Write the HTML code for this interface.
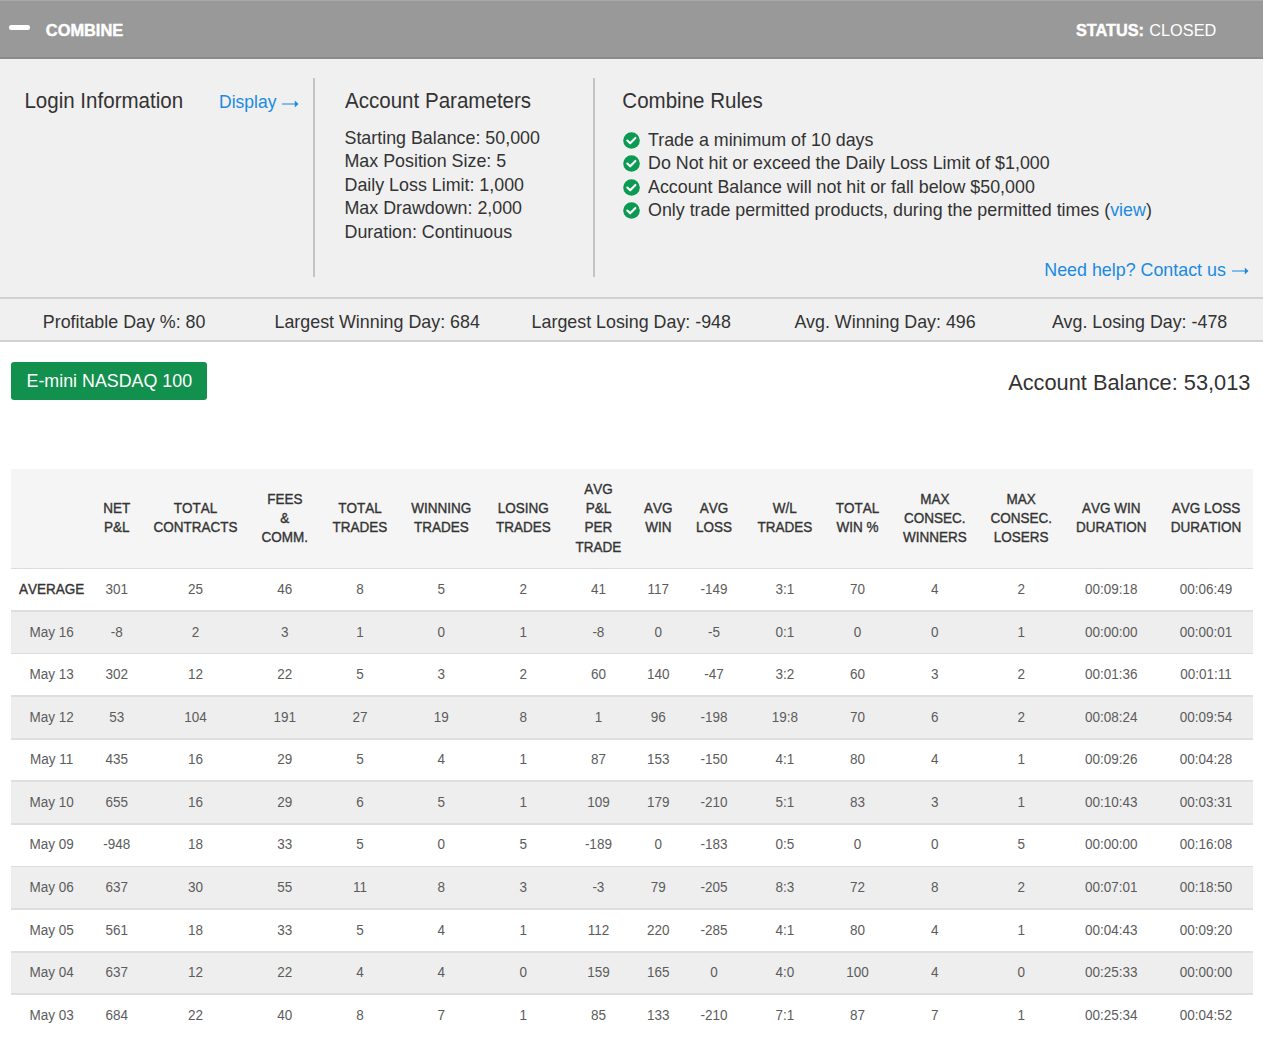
<!DOCTYPE html>
<html><head><meta charset="utf-8"><style>
html,body{margin:0;padding:0;}
body{width:1263px;height:1042px;position:relative;overflow:hidden;background:#fff;font-family:"Liberation Sans",sans-serif;}
.t{position:absolute;white-space:nowrap;line-height:1;}
.c{text-align:center;}
.r{text-align:right;}
.ck{position:absolute;}
</style></head><body>
<div style="position:absolute;left:0;top:0;width:1263px;height:58px;background:#999;"></div>
<div style="position:absolute;left:0;top:0;width:1263px;height:1px;background:#a8a8a8;"></div>
<div style="position:absolute;left:0;top:57px;width:1263px;height:1.5px;background:#8a8a8a;"></div>
<div style="position:absolute;left:8.6px;top:25.4px;width:21.4px;height:4.5px;background:#fff;border-radius:2.2px;"></div>
<div class="t" style="left:45.80px;top:22.42px;font-size:16.4px;color:#fff;font-weight:bold;-webkit-text-stroke:0.45px #fff;">COMBINE</div>
<div class="t" style="left:1075.90px;top:22.00px;font-size:16.3px;color:#fff;font-weight:bold;-webkit-text-stroke:0.45px #fff;">STATUS:</div>
<div class="t" style="left:1149.30px;top:22.00px;font-size:16.3px;color:#fff;">CLOSED</div>
<div style="position:absolute;left:0;top:58.5px;width:1263px;height:239px;background:#f0f0f0;"></div>
<div style="position:absolute;left:313px;top:78px;width:1.6px;height:199px;background:#c4c4c4;"></div>
<div style="position:absolute;left:593px;top:78px;width:1.6px;height:199px;background:#c4c4c4;"></div>
<div class="t" style="left:24.40px;top:91.10px;font-size:20.55px;color:#333;transform:scaleY(1.1);transform-origin:0 17.40px;">Login Information</div>
<div class="t" style="left:219.00px;top:94.19px;font-size:17.5px;color:#1a8be0;transform:scaleY(1.04);transform-origin:0 14.81px;">Display</div>
<svg class="ck" style="left:282.20px;top:99.50px" width="17" height="8" viewBox="0 0 17 8"><rect x="0" y="3.4" width="13.5" height="1.2" fill="#1a8be0" opacity="0.85"/><path d="M12.8 0.4 L16.5 4 L12.8 7.6 Z" fill="#1a8be0"/></svg>
<div class="t" style="left:345.00px;top:91.20px;font-size:20.55px;color:#333;transform:scaleY(1.1);transform-origin:0 17.40px;">Account Parameters</div>
<div class="t" style="left:344.50px;top:130.09px;font-size:17.85px;color:#333;transform:scaleY(1.04);transform-origin:0 15.11px;">Starting Balance: 50,000</div>
<div class="t" style="left:344.50px;top:153.49px;font-size:17.85px;color:#333;transform:scaleY(1.04);transform-origin:0 15.11px;">Max Position Size: 5</div>
<div class="t" style="left:344.50px;top:176.89px;font-size:17.85px;color:#333;transform:scaleY(1.04);transform-origin:0 15.11px;">Daily Loss Limit: 1,000</div>
<div class="t" style="left:344.50px;top:200.29px;font-size:17.85px;color:#333;transform:scaleY(1.04);transform-origin:0 15.11px;">Max Drawdown: 2,000</div>
<div class="t" style="left:344.50px;top:223.69px;font-size:17.85px;color:#333;transform:scaleY(1.04);transform-origin:0 15.11px;">Duration: Continuous</div>
<div class="t" style="left:622.30px;top:91.20px;font-size:20.55px;color:#333;transform:scaleY(1.1);transform-origin:0 17.40px;">Combine Rules</div>
<svg class="ck" style="left:623.3px;top:131.7px" width="17" height="17" viewBox="0 0 17 17"><circle cx="8.5" cy="8.5" r="8.3" fill="#0a9a52"/><path d="M4.3 8.5 L7.2 11.3 L12.4 5.9" stroke="#fff" stroke-width="2.1" fill="none" stroke-linecap="round" stroke-linejoin="round"/></svg>
<div class="t" style="left:648.00px;top:131.89px;font-size:17.85px;color:#333;transform:scaleY(1.04);transform-origin:0 15.11px;">Trade a minimum of 10 days</div>
<svg class="ck" style="left:623.3px;top:155.2px" width="17" height="17" viewBox="0 0 17 17"><circle cx="8.5" cy="8.5" r="8.3" fill="#0a9a52"/><path d="M4.3 8.5 L7.2 11.3 L12.4 5.9" stroke="#fff" stroke-width="2.1" fill="none" stroke-linecap="round" stroke-linejoin="round"/></svg>
<div class="t" style="left:648.00px;top:155.39px;font-size:17.85px;color:#333;transform:scaleY(1.04);transform-origin:0 15.11px;">Do Not hit or exceed the Daily Loss Limit of $1,000</div>
<svg class="ck" style="left:623.3px;top:178.7px" width="17" height="17" viewBox="0 0 17 17"><circle cx="8.5" cy="8.5" r="8.3" fill="#0a9a52"/><path d="M4.3 8.5 L7.2 11.3 L12.4 5.9" stroke="#fff" stroke-width="2.1" fill="none" stroke-linecap="round" stroke-linejoin="round"/></svg>
<div class="t" style="left:648.00px;top:178.89px;font-size:17.85px;color:#333;transform:scaleY(1.04);transform-origin:0 15.11px;">Account Balance will not hit or fall below $50,000</div>
<svg class="ck" style="left:623.3px;top:202.2px" width="17" height="17" viewBox="0 0 17 17"><circle cx="8.5" cy="8.5" r="8.3" fill="#0a9a52"/><path d="M4.3 8.5 L7.2 11.3 L12.4 5.9" stroke="#fff" stroke-width="2.1" fill="none" stroke-linecap="round" stroke-linejoin="round"/></svg>
<div class="t" style="left:648.00px;top:202.39px;font-size:17.85px;color:#333;transform:scaleY(1.04);transform-origin:0 15.11px;">Only trade permitted products, during the permitted times (<span style="color:#1a8be0">view</span>)</div>
<div class="t" style="left:1044.30px;top:261.69px;font-size:17.85px;color:#1a8be0;transform:scaleY(1.04);transform-origin:0 15.11px;">Need help? Contact us</div>
<svg class="ck" style="left:1231.90px;top:266.80px" width="17" height="8" viewBox="0 0 17 8"><rect x="0" y="3.4" width="13.5" height="1.2" fill="#1a8be0" opacity="0.85"/><path d="M12.8 0.4 L16.5 4 L12.8 7.6 Z" fill="#1a8be0"/></svg>
<div style="position:absolute;left:0;top:297.3px;width:1263px;height:2px;background:#d2d2d2;"></div>
<div style="position:absolute;left:0;top:299.3px;width:1263px;height:41px;background:#f0f0f0;"></div>
<div style="position:absolute;left:0;top:340.2px;width:1263px;height:2px;background:#d2d2d2;"></div>
<div class="t" style="left:42.80px;top:313.99px;font-size:17.85px;color:#333;transform:scaleY(1.04);transform-origin:0 15.11px;">Profitable Day %: 80</div>
<div class="t" style="left:274.50px;top:313.99px;font-size:17.85px;color:#333;transform:scaleY(1.04);transform-origin:0 15.11px;">Largest Winning Day: 684</div>
<div class="t" style="left:531.60px;top:313.99px;font-size:17.85px;color:#333;transform:scaleY(1.04);transform-origin:0 15.11px;">Largest Losing Day: -948</div>
<div class="t" style="left:794.50px;top:313.99px;font-size:17.85px;color:#333;transform:scaleY(1.04);transform-origin:0 15.11px;">Avg. Winning Day: 496</div>
<div class="t" style="left:1052.00px;top:313.99px;font-size:17.85px;color:#333;transform:scaleY(1.04);transform-origin:0 15.11px;">Avg. Losing Day: -478</div>
<div style="position:absolute;left:11px;top:362.2px;width:196.3px;height:38.3px;background:#12904d;border-radius:3px;"></div>
<div class="t" style="left:26.50px;top:372.79px;font-size:17.85px;color:#fff;transform:scaleY(1.04);transform-origin:0 15.11px;">E-mini NASDAQ 100</div>
<div class="t r" style="left:650.50px;width:600px;top:371.95px;font-size:21.8px;color:#333;transform:scaleY(1.05);transform-origin:0 18.45px;">Account Balance: 53,013</div>
<div style="position:absolute;left:11px;top:469px;width:1242px;height:100px;background:#f5f5f5;"></div>
<div class="t c" style="left:-183.30px;width:600px;top:502.32px;font-size:13.5px;color:#333;-webkit-text-stroke:0.35px #383838;font-kerning:none;transform:scaleY(1.1);transform-origin:0 11.43px;">NET</div>
<div class="t c" style="left:-183.30px;width:600px;top:521.42px;font-size:13.5px;color:#333;-webkit-text-stroke:0.35px #383838;font-kerning:none;transform:scaleY(1.1);transform-origin:0 11.43px;">P&amp;L</div>
<div class="t c" style="left:-104.40px;width:600px;top:502.32px;font-size:13.5px;color:#333;-webkit-text-stroke:0.35px #383838;font-kerning:none;transform:scaleY(1.1);transform-origin:0 11.43px;">TOTAL</div>
<div class="t c" style="left:-104.40px;width:600px;top:521.42px;font-size:13.5px;color:#333;-webkit-text-stroke:0.35px #383838;font-kerning:none;transform:scaleY(1.1);transform-origin:0 11.43px;">CONTRACTS</div>
<div class="t c" style="left:-15.20px;width:600px;top:492.77px;font-size:13.5px;color:#333;-webkit-text-stroke:0.35px #383838;font-kerning:none;transform:scaleY(1.1);transform-origin:0 11.43px;">FEES</div>
<div class="t c" style="left:-15.20px;width:600px;top:511.87px;font-size:13.5px;color:#333;-webkit-text-stroke:0.35px #383838;font-kerning:none;transform:scaleY(1.1);transform-origin:0 11.43px;">&amp;</div>
<div class="t c" style="left:-15.20px;width:600px;top:530.97px;font-size:13.5px;color:#333;-webkit-text-stroke:0.35px #383838;font-kerning:none;transform:scaleY(1.1);transform-origin:0 11.43px;">COMM.</div>
<div class="t c" style="left:60.00px;width:600px;top:502.32px;font-size:13.5px;color:#333;-webkit-text-stroke:0.35px #383838;font-kerning:none;transform:scaleY(1.1);transform-origin:0 11.43px;">TOTAL</div>
<div class="t c" style="left:60.00px;width:600px;top:521.42px;font-size:13.5px;color:#333;-webkit-text-stroke:0.35px #383838;font-kerning:none;transform:scaleY(1.1);transform-origin:0 11.43px;">TRADES</div>
<div class="t c" style="left:141.30px;width:600px;top:502.32px;font-size:13.5px;color:#333;-webkit-text-stroke:0.35px #383838;font-kerning:none;transform:scaleY(1.1);transform-origin:0 11.43px;">WINNING</div>
<div class="t c" style="left:141.30px;width:600px;top:521.42px;font-size:13.5px;color:#333;-webkit-text-stroke:0.35px #383838;font-kerning:none;transform:scaleY(1.1);transform-origin:0 11.43px;">TRADES</div>
<div class="t c" style="left:223.30px;width:600px;top:502.32px;font-size:13.5px;color:#333;-webkit-text-stroke:0.35px #383838;font-kerning:none;transform:scaleY(1.1);transform-origin:0 11.43px;">LOSING</div>
<div class="t c" style="left:223.30px;width:600px;top:521.42px;font-size:13.5px;color:#333;-webkit-text-stroke:0.35px #383838;font-kerning:none;transform:scaleY(1.1);transform-origin:0 11.43px;">TRADES</div>
<div class="t c" style="left:298.40px;width:600px;top:483.22px;font-size:13.5px;color:#333;-webkit-text-stroke:0.35px #383838;font-kerning:none;transform:scaleY(1.1);transform-origin:0 11.43px;">AVG</div>
<div class="t c" style="left:298.40px;width:600px;top:502.32px;font-size:13.5px;color:#333;-webkit-text-stroke:0.35px #383838;font-kerning:none;transform:scaleY(1.1);transform-origin:0 11.43px;">P&amp;L</div>
<div class="t c" style="left:298.40px;width:600px;top:521.42px;font-size:13.5px;color:#333;-webkit-text-stroke:0.35px #383838;font-kerning:none;transform:scaleY(1.1);transform-origin:0 11.43px;">PER</div>
<div class="t c" style="left:298.40px;width:600px;top:540.52px;font-size:13.5px;color:#333;-webkit-text-stroke:0.35px #383838;font-kerning:none;transform:scaleY(1.1);transform-origin:0 11.43px;">TRADE</div>
<div class="t c" style="left:358.30px;width:600px;top:502.32px;font-size:13.5px;color:#333;-webkit-text-stroke:0.35px #383838;font-kerning:none;transform:scaleY(1.1);transform-origin:0 11.43px;">AVG</div>
<div class="t c" style="left:358.30px;width:600px;top:521.42px;font-size:13.5px;color:#333;-webkit-text-stroke:0.35px #383838;font-kerning:none;transform:scaleY(1.1);transform-origin:0 11.43px;">WIN</div>
<div class="t c" style="left:414.10px;width:600px;top:502.32px;font-size:13.5px;color:#333;-webkit-text-stroke:0.35px #383838;font-kerning:none;transform:scaleY(1.1);transform-origin:0 11.43px;">AVG</div>
<div class="t c" style="left:414.10px;width:600px;top:521.42px;font-size:13.5px;color:#333;-webkit-text-stroke:0.35px #383838;font-kerning:none;transform:scaleY(1.1);transform-origin:0 11.43px;">LOSS</div>
<div class="t c" style="left:484.80px;width:600px;top:502.32px;font-size:13.5px;color:#333;-webkit-text-stroke:0.35px #383838;font-kerning:none;transform:scaleY(1.1);transform-origin:0 11.43px;">W/L</div>
<div class="t c" style="left:484.80px;width:600px;top:521.42px;font-size:13.5px;color:#333;-webkit-text-stroke:0.35px #383838;font-kerning:none;transform:scaleY(1.1);transform-origin:0 11.43px;">TRADES</div>
<div class="t c" style="left:557.60px;width:600px;top:502.32px;font-size:13.5px;color:#333;-webkit-text-stroke:0.35px #383838;font-kerning:none;transform:scaleY(1.1);transform-origin:0 11.43px;">TOTAL</div>
<div class="t c" style="left:557.60px;width:600px;top:521.42px;font-size:13.5px;color:#333;-webkit-text-stroke:0.35px #383838;font-kerning:none;transform:scaleY(1.1);transform-origin:0 11.43px;">WIN %</div>
<div class="t c" style="left:634.80px;width:600px;top:492.77px;font-size:13.5px;color:#333;-webkit-text-stroke:0.35px #383838;font-kerning:none;transform:scaleY(1.1);transform-origin:0 11.43px;">MAX</div>
<div class="t c" style="left:634.80px;width:600px;top:511.87px;font-size:13.5px;color:#333;-webkit-text-stroke:0.35px #383838;font-kerning:none;transform:scaleY(1.1);transform-origin:0 11.43px;">CONSEC.</div>
<div class="t c" style="left:634.80px;width:600px;top:530.97px;font-size:13.5px;color:#333;-webkit-text-stroke:0.35px #383838;font-kerning:none;transform:scaleY(1.1);transform-origin:0 11.43px;">WINNERS</div>
<div class="t c" style="left:721.20px;width:600px;top:492.77px;font-size:13.5px;color:#333;-webkit-text-stroke:0.35px #383838;font-kerning:none;transform:scaleY(1.1);transform-origin:0 11.43px;">MAX</div>
<div class="t c" style="left:721.20px;width:600px;top:511.87px;font-size:13.5px;color:#333;-webkit-text-stroke:0.35px #383838;font-kerning:none;transform:scaleY(1.1);transform-origin:0 11.43px;">CONSEC.</div>
<div class="t c" style="left:721.20px;width:600px;top:530.97px;font-size:13.5px;color:#333;-webkit-text-stroke:0.35px #383838;font-kerning:none;transform:scaleY(1.1);transform-origin:0 11.43px;">LOSERS</div>
<div class="t c" style="left:811.30px;width:600px;top:502.32px;font-size:13.5px;color:#333;-webkit-text-stroke:0.35px #383838;font-kerning:none;transform:scaleY(1.1);transform-origin:0 11.43px;">AVG WIN</div>
<div class="t c" style="left:811.30px;width:600px;top:521.42px;font-size:13.5px;color:#333;-webkit-text-stroke:0.35px #383838;font-kerning:none;transform:scaleY(1.1);transform-origin:0 11.43px;">DURATION</div>
<div class="t c" style="left:906.00px;width:600px;top:502.32px;font-size:13.5px;color:#333;-webkit-text-stroke:0.35px #383838;font-kerning:none;transform:scaleY(1.1);transform-origin:0 11.43px;">AVG LOSS</div>
<div class="t c" style="left:906.00px;width:600px;top:521.42px;font-size:13.5px;color:#333;-webkit-text-stroke:0.35px #383838;font-kerning:none;transform:scaleY(1.1);transform-origin:0 11.43px;">DURATION</div>
<div style="position:absolute;left:11px;top:567.6px;width:1242px;height:1.8px;background:#dcdcdc;"></div>
<div class="t c" style="left:-248.40px;width:600px;top:582.97px;font-size:13.5px;color:#333;-webkit-text-stroke:0.35px #383838;font-kerning:none;transform:scaleY(1.1);transform-origin:0 11.43px;">AVERAGE</div>
<div class="t c" style="left:-183.30px;width:600px;top:582.97px;font-size:13.5px;color:#5c5c5c;transform:scaleY(1.1);transform-origin:0 11.43px;">301</div>
<div class="t c" style="left:-104.40px;width:600px;top:582.97px;font-size:13.5px;color:#5c5c5c;transform:scaleY(1.1);transform-origin:0 11.43px;">25</div>
<div class="t c" style="left:-15.20px;width:600px;top:582.97px;font-size:13.5px;color:#5c5c5c;transform:scaleY(1.1);transform-origin:0 11.43px;">46</div>
<div class="t c" style="left:60.00px;width:600px;top:582.97px;font-size:13.5px;color:#5c5c5c;transform:scaleY(1.1);transform-origin:0 11.43px;">8</div>
<div class="t c" style="left:141.30px;width:600px;top:582.97px;font-size:13.5px;color:#5c5c5c;transform:scaleY(1.1);transform-origin:0 11.43px;">5</div>
<div class="t c" style="left:223.30px;width:600px;top:582.97px;font-size:13.5px;color:#5c5c5c;transform:scaleY(1.1);transform-origin:0 11.43px;">2</div>
<div class="t c" style="left:298.40px;width:600px;top:582.97px;font-size:13.5px;color:#5c5c5c;transform:scaleY(1.1);transform-origin:0 11.43px;">41</div>
<div class="t c" style="left:358.30px;width:600px;top:582.97px;font-size:13.5px;color:#5c5c5c;transform:scaleY(1.1);transform-origin:0 11.43px;">117</div>
<div class="t c" style="left:414.10px;width:600px;top:582.97px;font-size:13.5px;color:#5c5c5c;transform:scaleY(1.1);transform-origin:0 11.43px;">-149</div>
<div class="t c" style="left:484.80px;width:600px;top:582.97px;font-size:13.5px;color:#5c5c5c;transform:scaleY(1.1);transform-origin:0 11.43px;">3:1</div>
<div class="t c" style="left:557.60px;width:600px;top:582.97px;font-size:13.5px;color:#5c5c5c;transform:scaleY(1.1);transform-origin:0 11.43px;">70</div>
<div class="t c" style="left:634.80px;width:600px;top:582.97px;font-size:13.5px;color:#5c5c5c;transform:scaleY(1.1);transform-origin:0 11.43px;">4</div>
<div class="t c" style="left:721.20px;width:600px;top:582.97px;font-size:13.5px;color:#5c5c5c;transform:scaleY(1.1);transform-origin:0 11.43px;">2</div>
<div class="t c" style="left:811.30px;width:600px;top:582.97px;font-size:13.5px;color:#5c5c5c;transform:scaleY(1.1);transform-origin:0 11.43px;">00:09:18</div>
<div class="t c" style="left:906.00px;width:600px;top:582.97px;font-size:13.5px;color:#5c5c5c;transform:scaleY(1.1);transform-origin:0 11.43px;">00:06:49</div>
<div style="position:absolute;left:11px;top:610.98px;width:1242px;height:42.58px;background:#eeeeee;"></div>
<div style="position:absolute;left:11px;top:610.08px;width:1242px;height:1.8px;background:#dedede;"></div>
<div class="t c" style="left:-248.40px;width:600px;top:625.55px;font-size:13.5px;color:#5c5c5c;transform:scaleY(1.1);transform-origin:0 11.43px;">May 16</div>
<div class="t c" style="left:-183.30px;width:600px;top:625.55px;font-size:13.5px;color:#5c5c5c;transform:scaleY(1.1);transform-origin:0 11.43px;">-8</div>
<div class="t c" style="left:-104.40px;width:600px;top:625.55px;font-size:13.5px;color:#5c5c5c;transform:scaleY(1.1);transform-origin:0 11.43px;">2</div>
<div class="t c" style="left:-15.20px;width:600px;top:625.55px;font-size:13.5px;color:#5c5c5c;transform:scaleY(1.1);transform-origin:0 11.43px;">3</div>
<div class="t c" style="left:60.00px;width:600px;top:625.55px;font-size:13.5px;color:#5c5c5c;transform:scaleY(1.1);transform-origin:0 11.43px;">1</div>
<div class="t c" style="left:141.30px;width:600px;top:625.55px;font-size:13.5px;color:#5c5c5c;transform:scaleY(1.1);transform-origin:0 11.43px;">0</div>
<div class="t c" style="left:223.30px;width:600px;top:625.55px;font-size:13.5px;color:#5c5c5c;transform:scaleY(1.1);transform-origin:0 11.43px;">1</div>
<div class="t c" style="left:298.40px;width:600px;top:625.55px;font-size:13.5px;color:#5c5c5c;transform:scaleY(1.1);transform-origin:0 11.43px;">-8</div>
<div class="t c" style="left:358.30px;width:600px;top:625.55px;font-size:13.5px;color:#5c5c5c;transform:scaleY(1.1);transform-origin:0 11.43px;">0</div>
<div class="t c" style="left:414.10px;width:600px;top:625.55px;font-size:13.5px;color:#5c5c5c;transform:scaleY(1.1);transform-origin:0 11.43px;">-5</div>
<div class="t c" style="left:484.80px;width:600px;top:625.55px;font-size:13.5px;color:#5c5c5c;transform:scaleY(1.1);transform-origin:0 11.43px;">0:1</div>
<div class="t c" style="left:557.60px;width:600px;top:625.55px;font-size:13.5px;color:#5c5c5c;transform:scaleY(1.1);transform-origin:0 11.43px;">0</div>
<div class="t c" style="left:634.80px;width:600px;top:625.55px;font-size:13.5px;color:#5c5c5c;transform:scaleY(1.1);transform-origin:0 11.43px;">0</div>
<div class="t c" style="left:721.20px;width:600px;top:625.55px;font-size:13.5px;color:#5c5c5c;transform:scaleY(1.1);transform-origin:0 11.43px;">1</div>
<div class="t c" style="left:811.30px;width:600px;top:625.55px;font-size:13.5px;color:#5c5c5c;transform:scaleY(1.1);transform-origin:0 11.43px;">00:00:00</div>
<div class="t c" style="left:906.00px;width:600px;top:625.55px;font-size:13.5px;color:#5c5c5c;transform:scaleY(1.1);transform-origin:0 11.43px;">00:00:01</div>
<div style="position:absolute;left:11px;top:652.66px;width:1242px;height:1.8px;background:#dedede;"></div>
<div class="t c" style="left:-248.40px;width:600px;top:668.13px;font-size:13.5px;color:#5c5c5c;transform:scaleY(1.1);transform-origin:0 11.43px;">May 13</div>
<div class="t c" style="left:-183.30px;width:600px;top:668.13px;font-size:13.5px;color:#5c5c5c;transform:scaleY(1.1);transform-origin:0 11.43px;">302</div>
<div class="t c" style="left:-104.40px;width:600px;top:668.13px;font-size:13.5px;color:#5c5c5c;transform:scaleY(1.1);transform-origin:0 11.43px;">12</div>
<div class="t c" style="left:-15.20px;width:600px;top:668.13px;font-size:13.5px;color:#5c5c5c;transform:scaleY(1.1);transform-origin:0 11.43px;">22</div>
<div class="t c" style="left:60.00px;width:600px;top:668.13px;font-size:13.5px;color:#5c5c5c;transform:scaleY(1.1);transform-origin:0 11.43px;">5</div>
<div class="t c" style="left:141.30px;width:600px;top:668.13px;font-size:13.5px;color:#5c5c5c;transform:scaleY(1.1);transform-origin:0 11.43px;">3</div>
<div class="t c" style="left:223.30px;width:600px;top:668.13px;font-size:13.5px;color:#5c5c5c;transform:scaleY(1.1);transform-origin:0 11.43px;">2</div>
<div class="t c" style="left:298.40px;width:600px;top:668.13px;font-size:13.5px;color:#5c5c5c;transform:scaleY(1.1);transform-origin:0 11.43px;">60</div>
<div class="t c" style="left:358.30px;width:600px;top:668.13px;font-size:13.5px;color:#5c5c5c;transform:scaleY(1.1);transform-origin:0 11.43px;">140</div>
<div class="t c" style="left:414.10px;width:600px;top:668.13px;font-size:13.5px;color:#5c5c5c;transform:scaleY(1.1);transform-origin:0 11.43px;">-47</div>
<div class="t c" style="left:484.80px;width:600px;top:668.13px;font-size:13.5px;color:#5c5c5c;transform:scaleY(1.1);transform-origin:0 11.43px;">3:2</div>
<div class="t c" style="left:557.60px;width:600px;top:668.13px;font-size:13.5px;color:#5c5c5c;transform:scaleY(1.1);transform-origin:0 11.43px;">60</div>
<div class="t c" style="left:634.80px;width:600px;top:668.13px;font-size:13.5px;color:#5c5c5c;transform:scaleY(1.1);transform-origin:0 11.43px;">3</div>
<div class="t c" style="left:721.20px;width:600px;top:668.13px;font-size:13.5px;color:#5c5c5c;transform:scaleY(1.1);transform-origin:0 11.43px;">2</div>
<div class="t c" style="left:811.30px;width:600px;top:668.13px;font-size:13.5px;color:#5c5c5c;transform:scaleY(1.1);transform-origin:0 11.43px;">00:01:36</div>
<div class="t c" style="left:906.00px;width:600px;top:668.13px;font-size:13.5px;color:#5c5c5c;transform:scaleY(1.1);transform-origin:0 11.43px;">00:01:11</div>
<div style="position:absolute;left:11px;top:696.14px;width:1242px;height:42.58px;background:#eeeeee;"></div>
<div style="position:absolute;left:11px;top:695.24px;width:1242px;height:1.8px;background:#dedede;"></div>
<div class="t c" style="left:-248.40px;width:600px;top:710.71px;font-size:13.5px;color:#5c5c5c;transform:scaleY(1.1);transform-origin:0 11.43px;">May 12</div>
<div class="t c" style="left:-183.30px;width:600px;top:710.71px;font-size:13.5px;color:#5c5c5c;transform:scaleY(1.1);transform-origin:0 11.43px;">53</div>
<div class="t c" style="left:-104.40px;width:600px;top:710.71px;font-size:13.5px;color:#5c5c5c;transform:scaleY(1.1);transform-origin:0 11.43px;">104</div>
<div class="t c" style="left:-15.20px;width:600px;top:710.71px;font-size:13.5px;color:#5c5c5c;transform:scaleY(1.1);transform-origin:0 11.43px;">191</div>
<div class="t c" style="left:60.00px;width:600px;top:710.71px;font-size:13.5px;color:#5c5c5c;transform:scaleY(1.1);transform-origin:0 11.43px;">27</div>
<div class="t c" style="left:141.30px;width:600px;top:710.71px;font-size:13.5px;color:#5c5c5c;transform:scaleY(1.1);transform-origin:0 11.43px;">19</div>
<div class="t c" style="left:223.30px;width:600px;top:710.71px;font-size:13.5px;color:#5c5c5c;transform:scaleY(1.1);transform-origin:0 11.43px;">8</div>
<div class="t c" style="left:298.40px;width:600px;top:710.71px;font-size:13.5px;color:#5c5c5c;transform:scaleY(1.1);transform-origin:0 11.43px;">1</div>
<div class="t c" style="left:358.30px;width:600px;top:710.71px;font-size:13.5px;color:#5c5c5c;transform:scaleY(1.1);transform-origin:0 11.43px;">96</div>
<div class="t c" style="left:414.10px;width:600px;top:710.71px;font-size:13.5px;color:#5c5c5c;transform:scaleY(1.1);transform-origin:0 11.43px;">-198</div>
<div class="t c" style="left:484.80px;width:600px;top:710.71px;font-size:13.5px;color:#5c5c5c;transform:scaleY(1.1);transform-origin:0 11.43px;">19:8</div>
<div class="t c" style="left:557.60px;width:600px;top:710.71px;font-size:13.5px;color:#5c5c5c;transform:scaleY(1.1);transform-origin:0 11.43px;">70</div>
<div class="t c" style="left:634.80px;width:600px;top:710.71px;font-size:13.5px;color:#5c5c5c;transform:scaleY(1.1);transform-origin:0 11.43px;">6</div>
<div class="t c" style="left:721.20px;width:600px;top:710.71px;font-size:13.5px;color:#5c5c5c;transform:scaleY(1.1);transform-origin:0 11.43px;">2</div>
<div class="t c" style="left:811.30px;width:600px;top:710.71px;font-size:13.5px;color:#5c5c5c;transform:scaleY(1.1);transform-origin:0 11.43px;">00:08:24</div>
<div class="t c" style="left:906.00px;width:600px;top:710.71px;font-size:13.5px;color:#5c5c5c;transform:scaleY(1.1);transform-origin:0 11.43px;">00:09:54</div>
<div style="position:absolute;left:11px;top:737.82px;width:1242px;height:1.8px;background:#dedede;"></div>
<div class="t c" style="left:-248.40px;width:600px;top:753.29px;font-size:13.5px;color:#5c5c5c;transform:scaleY(1.1);transform-origin:0 11.43px;">May 11</div>
<div class="t c" style="left:-183.30px;width:600px;top:753.29px;font-size:13.5px;color:#5c5c5c;transform:scaleY(1.1);transform-origin:0 11.43px;">435</div>
<div class="t c" style="left:-104.40px;width:600px;top:753.29px;font-size:13.5px;color:#5c5c5c;transform:scaleY(1.1);transform-origin:0 11.43px;">16</div>
<div class="t c" style="left:-15.20px;width:600px;top:753.29px;font-size:13.5px;color:#5c5c5c;transform:scaleY(1.1);transform-origin:0 11.43px;">29</div>
<div class="t c" style="left:60.00px;width:600px;top:753.29px;font-size:13.5px;color:#5c5c5c;transform:scaleY(1.1);transform-origin:0 11.43px;">5</div>
<div class="t c" style="left:141.30px;width:600px;top:753.29px;font-size:13.5px;color:#5c5c5c;transform:scaleY(1.1);transform-origin:0 11.43px;">4</div>
<div class="t c" style="left:223.30px;width:600px;top:753.29px;font-size:13.5px;color:#5c5c5c;transform:scaleY(1.1);transform-origin:0 11.43px;">1</div>
<div class="t c" style="left:298.40px;width:600px;top:753.29px;font-size:13.5px;color:#5c5c5c;transform:scaleY(1.1);transform-origin:0 11.43px;">87</div>
<div class="t c" style="left:358.30px;width:600px;top:753.29px;font-size:13.5px;color:#5c5c5c;transform:scaleY(1.1);transform-origin:0 11.43px;">153</div>
<div class="t c" style="left:414.10px;width:600px;top:753.29px;font-size:13.5px;color:#5c5c5c;transform:scaleY(1.1);transform-origin:0 11.43px;">-150</div>
<div class="t c" style="left:484.80px;width:600px;top:753.29px;font-size:13.5px;color:#5c5c5c;transform:scaleY(1.1);transform-origin:0 11.43px;">4:1</div>
<div class="t c" style="left:557.60px;width:600px;top:753.29px;font-size:13.5px;color:#5c5c5c;transform:scaleY(1.1);transform-origin:0 11.43px;">80</div>
<div class="t c" style="left:634.80px;width:600px;top:753.29px;font-size:13.5px;color:#5c5c5c;transform:scaleY(1.1);transform-origin:0 11.43px;">4</div>
<div class="t c" style="left:721.20px;width:600px;top:753.29px;font-size:13.5px;color:#5c5c5c;transform:scaleY(1.1);transform-origin:0 11.43px;">1</div>
<div class="t c" style="left:811.30px;width:600px;top:753.29px;font-size:13.5px;color:#5c5c5c;transform:scaleY(1.1);transform-origin:0 11.43px;">00:09:26</div>
<div class="t c" style="left:906.00px;width:600px;top:753.29px;font-size:13.5px;color:#5c5c5c;transform:scaleY(1.1);transform-origin:0 11.43px;">00:04:28</div>
<div style="position:absolute;left:11px;top:781.30px;width:1242px;height:42.58px;background:#eeeeee;"></div>
<div style="position:absolute;left:11px;top:780.40px;width:1242px;height:1.8px;background:#dedede;"></div>
<div class="t c" style="left:-248.40px;width:600px;top:795.87px;font-size:13.5px;color:#5c5c5c;transform:scaleY(1.1);transform-origin:0 11.43px;">May 10</div>
<div class="t c" style="left:-183.30px;width:600px;top:795.87px;font-size:13.5px;color:#5c5c5c;transform:scaleY(1.1);transform-origin:0 11.43px;">655</div>
<div class="t c" style="left:-104.40px;width:600px;top:795.87px;font-size:13.5px;color:#5c5c5c;transform:scaleY(1.1);transform-origin:0 11.43px;">16</div>
<div class="t c" style="left:-15.20px;width:600px;top:795.87px;font-size:13.5px;color:#5c5c5c;transform:scaleY(1.1);transform-origin:0 11.43px;">29</div>
<div class="t c" style="left:60.00px;width:600px;top:795.87px;font-size:13.5px;color:#5c5c5c;transform:scaleY(1.1);transform-origin:0 11.43px;">6</div>
<div class="t c" style="left:141.30px;width:600px;top:795.87px;font-size:13.5px;color:#5c5c5c;transform:scaleY(1.1);transform-origin:0 11.43px;">5</div>
<div class="t c" style="left:223.30px;width:600px;top:795.87px;font-size:13.5px;color:#5c5c5c;transform:scaleY(1.1);transform-origin:0 11.43px;">1</div>
<div class="t c" style="left:298.40px;width:600px;top:795.87px;font-size:13.5px;color:#5c5c5c;transform:scaleY(1.1);transform-origin:0 11.43px;">109</div>
<div class="t c" style="left:358.30px;width:600px;top:795.87px;font-size:13.5px;color:#5c5c5c;transform:scaleY(1.1);transform-origin:0 11.43px;">179</div>
<div class="t c" style="left:414.10px;width:600px;top:795.87px;font-size:13.5px;color:#5c5c5c;transform:scaleY(1.1);transform-origin:0 11.43px;">-210</div>
<div class="t c" style="left:484.80px;width:600px;top:795.87px;font-size:13.5px;color:#5c5c5c;transform:scaleY(1.1);transform-origin:0 11.43px;">5:1</div>
<div class="t c" style="left:557.60px;width:600px;top:795.87px;font-size:13.5px;color:#5c5c5c;transform:scaleY(1.1);transform-origin:0 11.43px;">83</div>
<div class="t c" style="left:634.80px;width:600px;top:795.87px;font-size:13.5px;color:#5c5c5c;transform:scaleY(1.1);transform-origin:0 11.43px;">3</div>
<div class="t c" style="left:721.20px;width:600px;top:795.87px;font-size:13.5px;color:#5c5c5c;transform:scaleY(1.1);transform-origin:0 11.43px;">1</div>
<div class="t c" style="left:811.30px;width:600px;top:795.87px;font-size:13.5px;color:#5c5c5c;transform:scaleY(1.1);transform-origin:0 11.43px;">00:10:43</div>
<div class="t c" style="left:906.00px;width:600px;top:795.87px;font-size:13.5px;color:#5c5c5c;transform:scaleY(1.1);transform-origin:0 11.43px;">00:03:31</div>
<div style="position:absolute;left:11px;top:822.98px;width:1242px;height:1.8px;background:#dedede;"></div>
<div class="t c" style="left:-248.40px;width:600px;top:838.45px;font-size:13.5px;color:#5c5c5c;transform:scaleY(1.1);transform-origin:0 11.43px;">May 09</div>
<div class="t c" style="left:-183.30px;width:600px;top:838.45px;font-size:13.5px;color:#5c5c5c;transform:scaleY(1.1);transform-origin:0 11.43px;">-948</div>
<div class="t c" style="left:-104.40px;width:600px;top:838.45px;font-size:13.5px;color:#5c5c5c;transform:scaleY(1.1);transform-origin:0 11.43px;">18</div>
<div class="t c" style="left:-15.20px;width:600px;top:838.45px;font-size:13.5px;color:#5c5c5c;transform:scaleY(1.1);transform-origin:0 11.43px;">33</div>
<div class="t c" style="left:60.00px;width:600px;top:838.45px;font-size:13.5px;color:#5c5c5c;transform:scaleY(1.1);transform-origin:0 11.43px;">5</div>
<div class="t c" style="left:141.30px;width:600px;top:838.45px;font-size:13.5px;color:#5c5c5c;transform:scaleY(1.1);transform-origin:0 11.43px;">0</div>
<div class="t c" style="left:223.30px;width:600px;top:838.45px;font-size:13.5px;color:#5c5c5c;transform:scaleY(1.1);transform-origin:0 11.43px;">5</div>
<div class="t c" style="left:298.40px;width:600px;top:838.45px;font-size:13.5px;color:#5c5c5c;transform:scaleY(1.1);transform-origin:0 11.43px;">-189</div>
<div class="t c" style="left:358.30px;width:600px;top:838.45px;font-size:13.5px;color:#5c5c5c;transform:scaleY(1.1);transform-origin:0 11.43px;">0</div>
<div class="t c" style="left:414.10px;width:600px;top:838.45px;font-size:13.5px;color:#5c5c5c;transform:scaleY(1.1);transform-origin:0 11.43px;">-183</div>
<div class="t c" style="left:484.80px;width:600px;top:838.45px;font-size:13.5px;color:#5c5c5c;transform:scaleY(1.1);transform-origin:0 11.43px;">0:5</div>
<div class="t c" style="left:557.60px;width:600px;top:838.45px;font-size:13.5px;color:#5c5c5c;transform:scaleY(1.1);transform-origin:0 11.43px;">0</div>
<div class="t c" style="left:634.80px;width:600px;top:838.45px;font-size:13.5px;color:#5c5c5c;transform:scaleY(1.1);transform-origin:0 11.43px;">0</div>
<div class="t c" style="left:721.20px;width:600px;top:838.45px;font-size:13.5px;color:#5c5c5c;transform:scaleY(1.1);transform-origin:0 11.43px;">5</div>
<div class="t c" style="left:811.30px;width:600px;top:838.45px;font-size:13.5px;color:#5c5c5c;transform:scaleY(1.1);transform-origin:0 11.43px;">00:00:00</div>
<div class="t c" style="left:906.00px;width:600px;top:838.45px;font-size:13.5px;color:#5c5c5c;transform:scaleY(1.1);transform-origin:0 11.43px;">00:16:08</div>
<div style="position:absolute;left:11px;top:866.46px;width:1242px;height:42.58px;background:#eeeeee;"></div>
<div style="position:absolute;left:11px;top:865.56px;width:1242px;height:1.8px;background:#dedede;"></div>
<div class="t c" style="left:-248.40px;width:600px;top:881.03px;font-size:13.5px;color:#5c5c5c;transform:scaleY(1.1);transform-origin:0 11.43px;">May 06</div>
<div class="t c" style="left:-183.30px;width:600px;top:881.03px;font-size:13.5px;color:#5c5c5c;transform:scaleY(1.1);transform-origin:0 11.43px;">637</div>
<div class="t c" style="left:-104.40px;width:600px;top:881.03px;font-size:13.5px;color:#5c5c5c;transform:scaleY(1.1);transform-origin:0 11.43px;">30</div>
<div class="t c" style="left:-15.20px;width:600px;top:881.03px;font-size:13.5px;color:#5c5c5c;transform:scaleY(1.1);transform-origin:0 11.43px;">55</div>
<div class="t c" style="left:60.00px;width:600px;top:881.03px;font-size:13.5px;color:#5c5c5c;transform:scaleY(1.1);transform-origin:0 11.43px;">11</div>
<div class="t c" style="left:141.30px;width:600px;top:881.03px;font-size:13.5px;color:#5c5c5c;transform:scaleY(1.1);transform-origin:0 11.43px;">8</div>
<div class="t c" style="left:223.30px;width:600px;top:881.03px;font-size:13.5px;color:#5c5c5c;transform:scaleY(1.1);transform-origin:0 11.43px;">3</div>
<div class="t c" style="left:298.40px;width:600px;top:881.03px;font-size:13.5px;color:#5c5c5c;transform:scaleY(1.1);transform-origin:0 11.43px;">-3</div>
<div class="t c" style="left:358.30px;width:600px;top:881.03px;font-size:13.5px;color:#5c5c5c;transform:scaleY(1.1);transform-origin:0 11.43px;">79</div>
<div class="t c" style="left:414.10px;width:600px;top:881.03px;font-size:13.5px;color:#5c5c5c;transform:scaleY(1.1);transform-origin:0 11.43px;">-205</div>
<div class="t c" style="left:484.80px;width:600px;top:881.03px;font-size:13.5px;color:#5c5c5c;transform:scaleY(1.1);transform-origin:0 11.43px;">8:3</div>
<div class="t c" style="left:557.60px;width:600px;top:881.03px;font-size:13.5px;color:#5c5c5c;transform:scaleY(1.1);transform-origin:0 11.43px;">72</div>
<div class="t c" style="left:634.80px;width:600px;top:881.03px;font-size:13.5px;color:#5c5c5c;transform:scaleY(1.1);transform-origin:0 11.43px;">8</div>
<div class="t c" style="left:721.20px;width:600px;top:881.03px;font-size:13.5px;color:#5c5c5c;transform:scaleY(1.1);transform-origin:0 11.43px;">2</div>
<div class="t c" style="left:811.30px;width:600px;top:881.03px;font-size:13.5px;color:#5c5c5c;transform:scaleY(1.1);transform-origin:0 11.43px;">00:07:01</div>
<div class="t c" style="left:906.00px;width:600px;top:881.03px;font-size:13.5px;color:#5c5c5c;transform:scaleY(1.1);transform-origin:0 11.43px;">00:18:50</div>
<div style="position:absolute;left:11px;top:908.14px;width:1242px;height:1.8px;background:#dedede;"></div>
<div class="t c" style="left:-248.40px;width:600px;top:923.61px;font-size:13.5px;color:#5c5c5c;transform:scaleY(1.1);transform-origin:0 11.43px;">May 05</div>
<div class="t c" style="left:-183.30px;width:600px;top:923.61px;font-size:13.5px;color:#5c5c5c;transform:scaleY(1.1);transform-origin:0 11.43px;">561</div>
<div class="t c" style="left:-104.40px;width:600px;top:923.61px;font-size:13.5px;color:#5c5c5c;transform:scaleY(1.1);transform-origin:0 11.43px;">18</div>
<div class="t c" style="left:-15.20px;width:600px;top:923.61px;font-size:13.5px;color:#5c5c5c;transform:scaleY(1.1);transform-origin:0 11.43px;">33</div>
<div class="t c" style="left:60.00px;width:600px;top:923.61px;font-size:13.5px;color:#5c5c5c;transform:scaleY(1.1);transform-origin:0 11.43px;">5</div>
<div class="t c" style="left:141.30px;width:600px;top:923.61px;font-size:13.5px;color:#5c5c5c;transform:scaleY(1.1);transform-origin:0 11.43px;">4</div>
<div class="t c" style="left:223.30px;width:600px;top:923.61px;font-size:13.5px;color:#5c5c5c;transform:scaleY(1.1);transform-origin:0 11.43px;">1</div>
<div class="t c" style="left:298.40px;width:600px;top:923.61px;font-size:13.5px;color:#5c5c5c;transform:scaleY(1.1);transform-origin:0 11.43px;">112</div>
<div class="t c" style="left:358.30px;width:600px;top:923.61px;font-size:13.5px;color:#5c5c5c;transform:scaleY(1.1);transform-origin:0 11.43px;">220</div>
<div class="t c" style="left:414.10px;width:600px;top:923.61px;font-size:13.5px;color:#5c5c5c;transform:scaleY(1.1);transform-origin:0 11.43px;">-285</div>
<div class="t c" style="left:484.80px;width:600px;top:923.61px;font-size:13.5px;color:#5c5c5c;transform:scaleY(1.1);transform-origin:0 11.43px;">4:1</div>
<div class="t c" style="left:557.60px;width:600px;top:923.61px;font-size:13.5px;color:#5c5c5c;transform:scaleY(1.1);transform-origin:0 11.43px;">80</div>
<div class="t c" style="left:634.80px;width:600px;top:923.61px;font-size:13.5px;color:#5c5c5c;transform:scaleY(1.1);transform-origin:0 11.43px;">4</div>
<div class="t c" style="left:721.20px;width:600px;top:923.61px;font-size:13.5px;color:#5c5c5c;transform:scaleY(1.1);transform-origin:0 11.43px;">1</div>
<div class="t c" style="left:811.30px;width:600px;top:923.61px;font-size:13.5px;color:#5c5c5c;transform:scaleY(1.1);transform-origin:0 11.43px;">00:04:43</div>
<div class="t c" style="left:906.00px;width:600px;top:923.61px;font-size:13.5px;color:#5c5c5c;transform:scaleY(1.1);transform-origin:0 11.43px;">00:09:20</div>
<div style="position:absolute;left:11px;top:951.62px;width:1242px;height:42.58px;background:#eeeeee;"></div>
<div style="position:absolute;left:11px;top:950.72px;width:1242px;height:1.8px;background:#dedede;"></div>
<div class="t c" style="left:-248.40px;width:600px;top:966.19px;font-size:13.5px;color:#5c5c5c;transform:scaleY(1.1);transform-origin:0 11.43px;">May 04</div>
<div class="t c" style="left:-183.30px;width:600px;top:966.19px;font-size:13.5px;color:#5c5c5c;transform:scaleY(1.1);transform-origin:0 11.43px;">637</div>
<div class="t c" style="left:-104.40px;width:600px;top:966.19px;font-size:13.5px;color:#5c5c5c;transform:scaleY(1.1);transform-origin:0 11.43px;">12</div>
<div class="t c" style="left:-15.20px;width:600px;top:966.19px;font-size:13.5px;color:#5c5c5c;transform:scaleY(1.1);transform-origin:0 11.43px;">22</div>
<div class="t c" style="left:60.00px;width:600px;top:966.19px;font-size:13.5px;color:#5c5c5c;transform:scaleY(1.1);transform-origin:0 11.43px;">4</div>
<div class="t c" style="left:141.30px;width:600px;top:966.19px;font-size:13.5px;color:#5c5c5c;transform:scaleY(1.1);transform-origin:0 11.43px;">4</div>
<div class="t c" style="left:223.30px;width:600px;top:966.19px;font-size:13.5px;color:#5c5c5c;transform:scaleY(1.1);transform-origin:0 11.43px;">0</div>
<div class="t c" style="left:298.40px;width:600px;top:966.19px;font-size:13.5px;color:#5c5c5c;transform:scaleY(1.1);transform-origin:0 11.43px;">159</div>
<div class="t c" style="left:358.30px;width:600px;top:966.19px;font-size:13.5px;color:#5c5c5c;transform:scaleY(1.1);transform-origin:0 11.43px;">165</div>
<div class="t c" style="left:414.10px;width:600px;top:966.19px;font-size:13.5px;color:#5c5c5c;transform:scaleY(1.1);transform-origin:0 11.43px;">0</div>
<div class="t c" style="left:484.80px;width:600px;top:966.19px;font-size:13.5px;color:#5c5c5c;transform:scaleY(1.1);transform-origin:0 11.43px;">4:0</div>
<div class="t c" style="left:557.60px;width:600px;top:966.19px;font-size:13.5px;color:#5c5c5c;transform:scaleY(1.1);transform-origin:0 11.43px;">100</div>
<div class="t c" style="left:634.80px;width:600px;top:966.19px;font-size:13.5px;color:#5c5c5c;transform:scaleY(1.1);transform-origin:0 11.43px;">4</div>
<div class="t c" style="left:721.20px;width:600px;top:966.19px;font-size:13.5px;color:#5c5c5c;transform:scaleY(1.1);transform-origin:0 11.43px;">0</div>
<div class="t c" style="left:811.30px;width:600px;top:966.19px;font-size:13.5px;color:#5c5c5c;transform:scaleY(1.1);transform-origin:0 11.43px;">00:25:33</div>
<div class="t c" style="left:906.00px;width:600px;top:966.19px;font-size:13.5px;color:#5c5c5c;transform:scaleY(1.1);transform-origin:0 11.43px;">00:00:00</div>
<div style="position:absolute;left:11px;top:993.30px;width:1242px;height:1.8px;background:#dedede;"></div>
<div class="t c" style="left:-248.40px;width:600px;top:1008.77px;font-size:13.5px;color:#5c5c5c;transform:scaleY(1.1);transform-origin:0 11.43px;">May 03</div>
<div class="t c" style="left:-183.30px;width:600px;top:1008.77px;font-size:13.5px;color:#5c5c5c;transform:scaleY(1.1);transform-origin:0 11.43px;">684</div>
<div class="t c" style="left:-104.40px;width:600px;top:1008.77px;font-size:13.5px;color:#5c5c5c;transform:scaleY(1.1);transform-origin:0 11.43px;">22</div>
<div class="t c" style="left:-15.20px;width:600px;top:1008.77px;font-size:13.5px;color:#5c5c5c;transform:scaleY(1.1);transform-origin:0 11.43px;">40</div>
<div class="t c" style="left:60.00px;width:600px;top:1008.77px;font-size:13.5px;color:#5c5c5c;transform:scaleY(1.1);transform-origin:0 11.43px;">8</div>
<div class="t c" style="left:141.30px;width:600px;top:1008.77px;font-size:13.5px;color:#5c5c5c;transform:scaleY(1.1);transform-origin:0 11.43px;">7</div>
<div class="t c" style="left:223.30px;width:600px;top:1008.77px;font-size:13.5px;color:#5c5c5c;transform:scaleY(1.1);transform-origin:0 11.43px;">1</div>
<div class="t c" style="left:298.40px;width:600px;top:1008.77px;font-size:13.5px;color:#5c5c5c;transform:scaleY(1.1);transform-origin:0 11.43px;">85</div>
<div class="t c" style="left:358.30px;width:600px;top:1008.77px;font-size:13.5px;color:#5c5c5c;transform:scaleY(1.1);transform-origin:0 11.43px;">133</div>
<div class="t c" style="left:414.10px;width:600px;top:1008.77px;font-size:13.5px;color:#5c5c5c;transform:scaleY(1.1);transform-origin:0 11.43px;">-210</div>
<div class="t c" style="left:484.80px;width:600px;top:1008.77px;font-size:13.5px;color:#5c5c5c;transform:scaleY(1.1);transform-origin:0 11.43px;">7:1</div>
<div class="t c" style="left:557.60px;width:600px;top:1008.77px;font-size:13.5px;color:#5c5c5c;transform:scaleY(1.1);transform-origin:0 11.43px;">87</div>
<div class="t c" style="left:634.80px;width:600px;top:1008.77px;font-size:13.5px;color:#5c5c5c;transform:scaleY(1.1);transform-origin:0 11.43px;">7</div>
<div class="t c" style="left:721.20px;width:600px;top:1008.77px;font-size:13.5px;color:#5c5c5c;transform:scaleY(1.1);transform-origin:0 11.43px;">1</div>
<div class="t c" style="left:811.30px;width:600px;top:1008.77px;font-size:13.5px;color:#5c5c5c;transform:scaleY(1.1);transform-origin:0 11.43px;">00:25:34</div>
<div class="t c" style="left:906.00px;width:600px;top:1008.77px;font-size:13.5px;color:#5c5c5c;transform:scaleY(1.1);transform-origin:0 11.43px;">00:04:52</div>
</body></html>
